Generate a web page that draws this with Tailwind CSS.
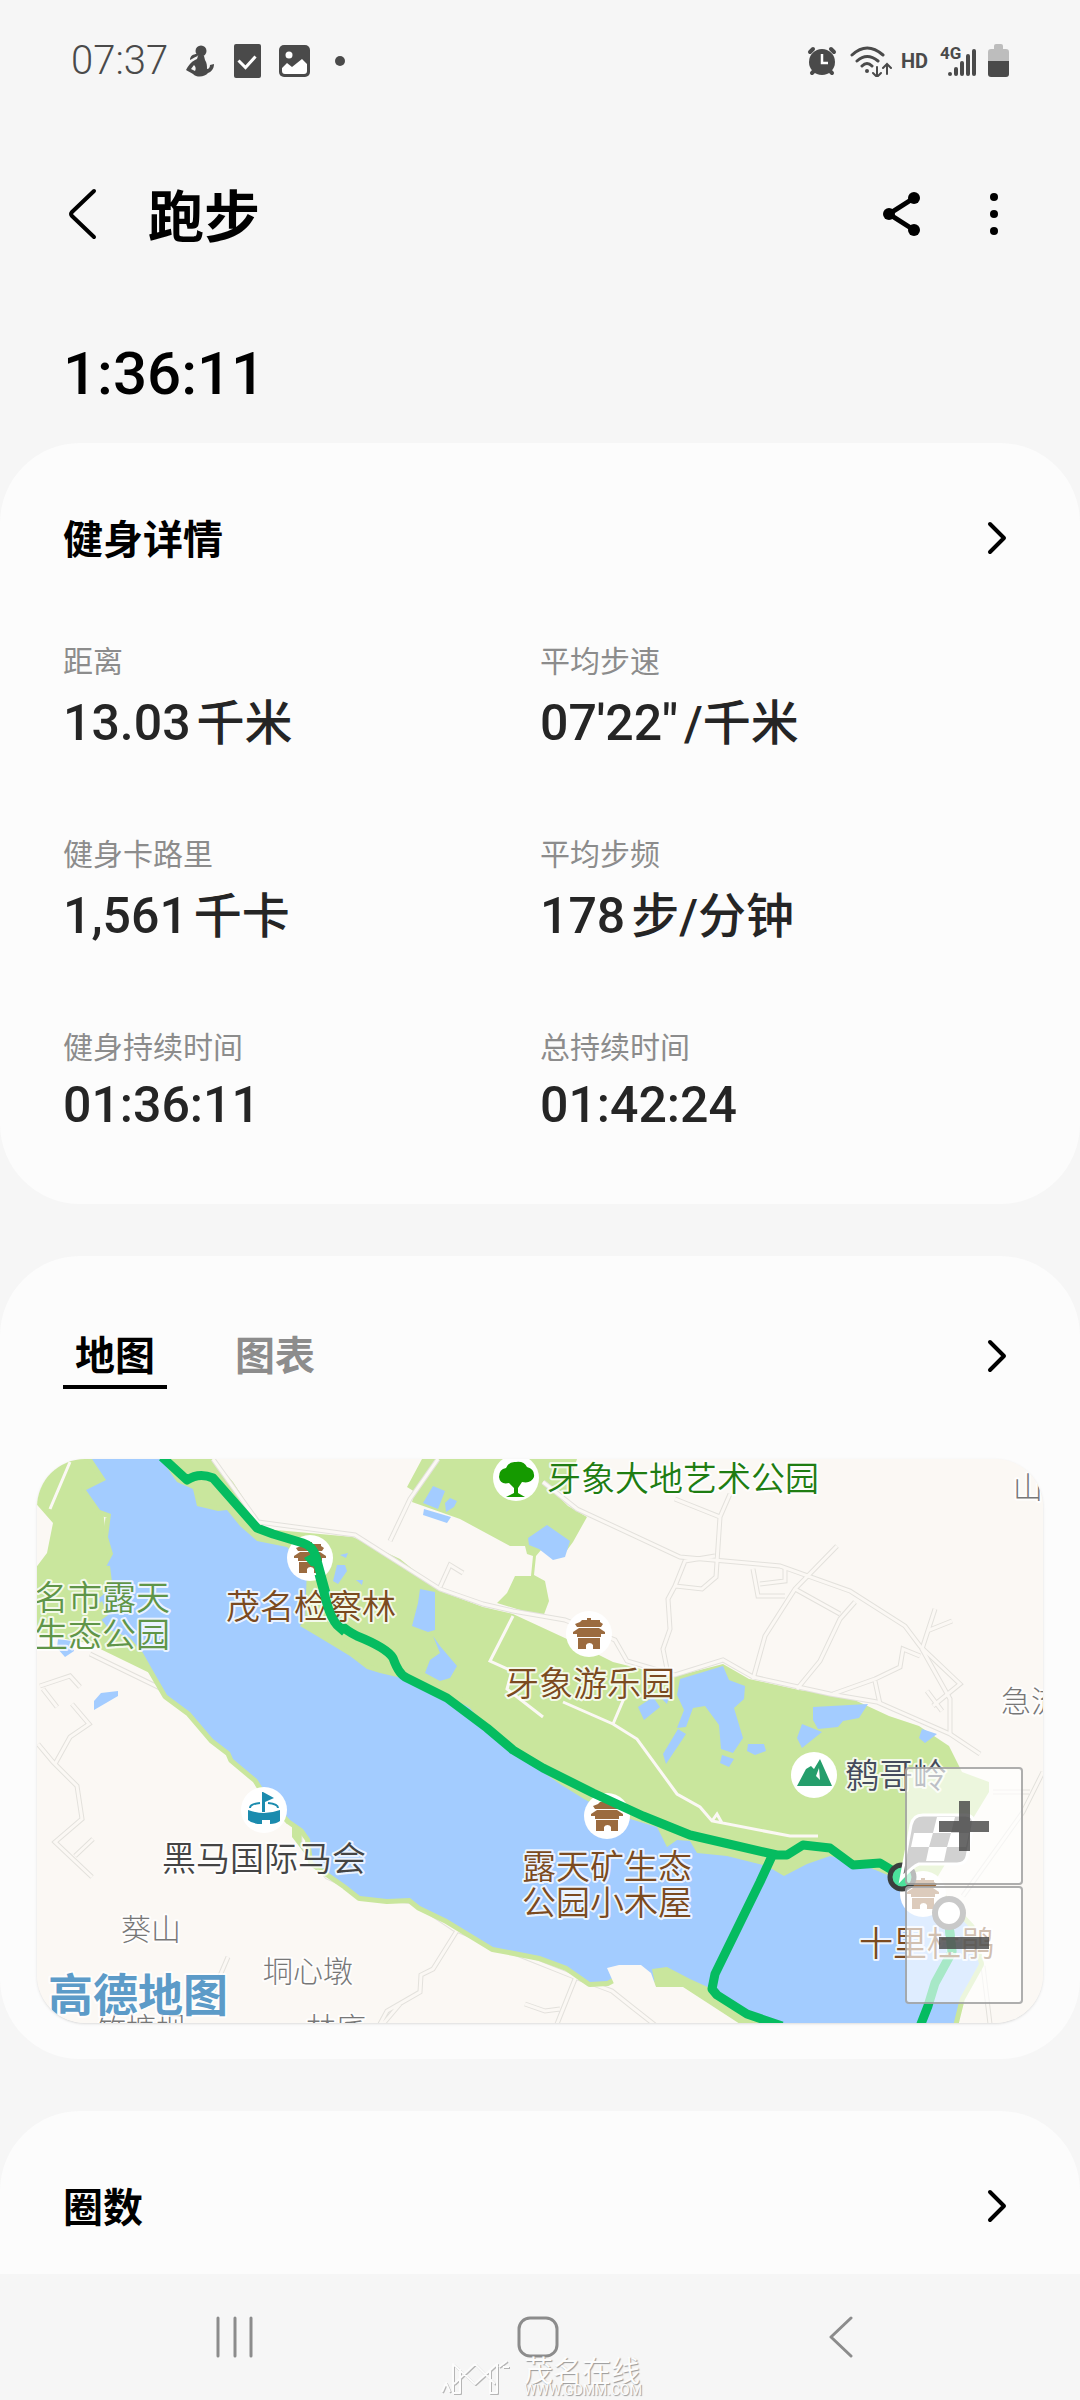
<!DOCTYPE html>
<html lang="zh-CN">
<head>
    <meta charset="UTF-8">
    <meta name="viewport" content="width=device-width, initial-scale=1.0">
    <title>跑步</title>
    <script src="https://cdn.jsdelivr.net/npm/@tailwindcss/browser@4"></script>
    <style>
        body {
            font-family: 'Roboto', 'Noto Sans CJK SC', sans-serif;
        }
        .halo text {
            paint-order: stroke;
            stroke: #ffffff;
            stroke-opacity: .8;
            stroke-width: 4px;
            stroke-linejoin: round;
        }
    </style>
</head>
<body class="bg-[#f6f6f6] text-black min-h-screen flex flex-col">
    <!-- Status Bar -->
    <div class="h-[122px] px-[71px] flex items-center justify-between text-[#4a4a4a]">
        <div class="flex items-center">
            <span class="text-[40px] leading-[48px] font-light">07:37</span>
            <svg class="ml-[18px] w-7 h-8" viewBox="0 0 28 32" fill="#4a4a4a">
                <circle cx="15" cy="6" r="5.5"/>
                <path d="M11 9l1 2c-4 1-5 3-8 4 0-4 3-6 7-6zM12 11h6l1 4c2 3 2 6 2 9 2 0 3-2 3-4l4-1c0 5-3 8-6 9-3 4-11 5-15 1-2-1-5-3-7-4 2-4 5-8 9-10l2-1z"/>
                <path d="M8 20l-3 4 4 2c1-2 1-4-1-6z" fill="#f6f6f6"/>
            </svg>
            <svg class="ml-5 w-[27px] h-[34px]" viewBox="0 0 27 34">
                <rect width="27" height="34" rx="2" fill="#4a4a4a"/>
                <path d="M4.500 16.500l7 7 10-11" fill="none" stroke="#fff" stroke-width="3"/>
            </svg>
            <svg class="ml-[18px] w-8 h-8" viewBox="0 0 32 32">
                <rect width="31" height="32" rx="5" fill="#4a4a4a"/>
                <circle cx="10" cy="10" r="3.500" fill="#fff"/>
                <path d="M3 23l5-5 5 4 10-8 5 5v7q0 3-3 3H6q-3 0-3-3z" fill="#fff"/>
            </svg>
            <span class="ml-6 w-[10px] h-[10px] rounded-full bg-[#4a4a4a]"></span>
        </div>
        <div class="flex items-center">
            <svg class="w-[30px] h-8" viewBox="0 0 30 32">
                <g stroke="#4a4a4a" stroke-width="4" stroke-linecap="round">
                    <path d="M3 7l3-3M27 7l-3-3M5 28l3-3M25 28l-3-3"/>
                </g>
                <circle cx="15" cy="17" r="13" fill="#4a4a4a"/>
                <path d="M15 9v9h6" fill="none" stroke="#fff" stroke-width="2.500"/>
            </svg>
            <svg class="ml-3 w-11 h-8" viewBox="0 0 44 32" fill="none" stroke="#4a4a4a" stroke-width="3" stroke-linecap="round">
                <path d="M3 10q15-14 31 0M8 16q10-9 21 0M13 21q5-5 10 0"/>
                <circle cx="18" cy="26" r="2" fill="#4a4a4a" stroke="none"/>
                <path d="M28 22v9M24 28l4 4 4-4M38 29v-9M34 23l4-4 4 4" stroke-width="2"/>
            </svg>
            <span class="ml-2 text-[20px] leading-6 font-bold">HD</span>
            <div class="relative ml-2 w-11 h-8">
                <span class="absolute left-1 top-0 text-[17px] leading-4 font-bold">4G</span>
                <svg class="w-full h-full" viewBox="0 0 44 32" fill="#4a4a4a">
                    <rect x="12" y="27" width="4" height="4" rx="2"/>
                    <rect x="18" y="22" width="4" height="9" rx="2"/>
                    <rect x="24" y="16" width="4" height="15" rx="2"/>
                    <rect x="30" y="9" width="4" height="22" rx="2"/>
                    <rect x="36" y="4" width="4" height="27" rx="2"/>
                </svg>
            </div>
            <svg class="ml-2 w-[21px] h-[34px]" viewBox="0 0 21 34">
                <path d="M6 2q0-2 2-2h5q2 0 2 2v3h3q3 0 3 3v10H0V8q0-3 3-3h3z" fill="#bdbdbd"/>
                <path d="M0 17h21v13q0 3-3 3H3q-3 0-3-3z" fill="#4a4a4a"/>
            </svg>
        </div>
    </div>

    <!-- Header -->
    <header class="h-[188px] pl-16 pr-[76px] pb-1 flex items-center">
        <button class="w-10 h-14 flex items-center justify-center" aria-label="返回">
            <svg class="w-8 h-[52px]" viewBox="0 0 32 52" fill="none" stroke="#000" stroke-width="4" stroke-linecap="round" stroke-linejoin="round">
                <path d="M26 3L4 24q-2 2 0 4l22 21"/>
            </svg>
        </button>
        <h1 class="ml-11 pt-2 flex-1 text-[56px] leading-[72px] font-bold">跑步</h1>
        <button aria-label="分享">
            <svg class="w-10 h-11" viewBox="0 0 40 44">
                <path d="M32 6L7 22l25 16" fill="none" stroke="#000" stroke-width="5"/>
                <circle cx="32" cy="6" r="6"/><circle cx="7" cy="22" r="6"/><circle cx="32" cy="38" r="6"/>
            </svg>
        </button>
        <button class="ml-[62px]" aria-label="更多">
            <svg class="w-5 h-11" viewBox="0 0 20 44">
                <circle cx="10" cy="5" r="4"/><circle cx="10" cy="22" r="4"/><circle cx="10" cy="39" r="4"/>
            </svg>
        </button>
    </header>

    <p class="h-[133px] pt-7 px-[63px] text-[60px] leading-[72px] font-medium">1:36:11</p>

    <main class="flex-1 flex flex-col gap-[52px]">
        <!-- Details -->
        <section class="bg-[#fcfcfc] rounded-[80px] px-[63px] pt-[70px] pb-16">
            <div class="h-14 flex items-center justify-between">
                <h2 class="text-[40px] leading-[56px] font-bold">健身详情</h2>
                <button class="w-10 h-10" aria-label="查看健身详情">
                    <svg class="w-10 h-10" viewBox="0 0 40 40" fill="none" stroke="#000" stroke-width="4" stroke-linecap="round" stroke-linejoin="round"><path d="M13 3l14 14-14 14"/></svg>
                </button>
            </div>
            <dl class="mt-[71px] grid grid-cols-2 gap-y-[70px] text-[#252525]">
                <div>
                    <dt class="text-[30px] leading-[44px] text-[#8c8c8c]">距离</dt>
                    <dd class="text-[50px] leading-[78px] font-medium">13.03<span class="ml-[6px] text-[48px]">千米</span></dd>
                </div>
                <div>
                    <dt class="text-[30px] leading-[44px] text-[#8c8c8c]">平均步速</dt>
                    <dd class="text-[50px] leading-[78px] font-medium">07'22"<span class="ml-[6px] text-[48px]">/千米</span></dd>
                </div>
                <div>
                    <dt class="text-[30px] leading-[44px] text-[#8c8c8c]">健身卡路里</dt>
                    <dd class="text-[50px] leading-[78px] font-medium">1,561<span class="ml-[6px] text-[48px]">千卡</span></dd>
                </div>
                <div>
                    <dt class="text-[30px] leading-[44px] text-[#8c8c8c]">平均步频</dt>
                    <dd class="text-[50px] leading-[78px] font-medium">178<span class="ml-[6px] text-[48px]">步/分钟</span></dd>
                </div>
                <div>
                    <dt class="text-[30px] leading-[44px] text-[#8c8c8c]">健身持续时间</dt>
                    <dd class="text-[50px] leading-[70px] font-medium">01:36:11</dd>
                </div>
                <div>
                    <dt class="text-[30px] leading-[44px] text-[#8c8c8c]">总持续时间</dt>
                    <dd class="text-[50px] leading-[70px] font-medium">01:42:24</dd>
                </div>
            </dl>
        </section>

        <!-- Map -->
        <section class="bg-[#fcfcfc] rounded-[80px] pt-[72px] pb-9">
            <div class="px-[63px] flex items-center justify-between">
                <div class="flex gap-14" role="tablist">
                    <button role="tab" aria-selected="true" class="px-3 border-b-4 border-black text-[40px] leading-[57px] font-bold">地图</button>
                    <button role="tab" aria-selected="false" class="px-3 border-b-4 border-transparent text-[40px] leading-[57px] font-bold text-[#8c8c8c]">图表</button>
                </div>
                <button class="w-10 h-10" aria-label="查看地图">
                    <svg class="w-10 h-10" viewBox="0 0 40 40" fill="none" stroke="#000" stroke-width="4" stroke-linecap="round" stroke-linejoin="round"><path d="M13 3l14 14-14 14"/></svg>
                </button>
            </div>
            <div class="relative mt-[70px] mx-[37px] rounded-[48px] overflow-hidden bg-[#fbf8f4] shadow-sm">
                <svg class="block w-full h-auto" viewBox="37 1460 1006 564" font-family="'Noto Sans CJK SC', sans-serif">
                    <defs>
                        <g id="roads" fill="none">
                            <path d="M40 1687l30-10 10 11M43 1690l14 18M72 1705l17 20-19 13-15 27M38 1745l15 18 24 24 5 33-27 23 37 35M93 1840l-18 17"/>
                            <path d="M90 1655l74 36 25 20 41 44 24 18 10 17 23 23 17 14v21l23 30 45 20 42 5 40 27 118 47 40 15 20 16 28 22"/>
                            <path d="M458 1930l-25 40-12 6-1 17-33 19-7 13M577 1975l-20 50M525 2005l20 7 15-2M228 1958l-18 42M400 2005l-17 20"/>
                            <path d="M213 1460l45 63 97 13 85 54 43 15 30 7 52 9 50 20 12 21 48 14 48-15 30 17 77 17 47 8 73 32 30 20"/>
                            <path d="M390 1542l20-42 28-40M440 1588l10-22 13 8"/>
                            <path d="M543 1483l34 27 103 48 100 9 70 25 55 35 15 20 40 38-27 22"/>
                            <path d="M675 1500l45 18-4 60-14 12-27-3 10-25 30-5M720 1518l10-23M675 1587l-7 13 2 30-7 20 5 25"/>
                            <path d="M753 1570l5 27h27M760 1585l25-3v-14M837 1547l-42 43-30 47-12 43M795 1590l45 25M855 1603l-15 17-20 42-23 28M833 1695l42-15 25-12 3-18 17 7M875 1682l5 23M935 1610l-13 40 28 50v35M927 1632l25-10M927 1692l15 20"/>
                            <path d="M1043 1773l-20 40-60 84M993 1793h37M983 1967l7 58"/>
                        </g>
                        <g id="pagoda" fill="#9b6b3f">
                            <path d="M-7-14h5v-2h4v2h9v2l3 2-2 3h-24l-2-3 5-2z"/>
                            <path d="M-10-6h20l6 4v2h-4v3h-24v-3h-4v-2z"/>
                            <path d="M-11 4h22v11h-7v-4a4 4 0 0 0-7 0v4h-8z"/>
                        </g>
                    </defs>
                    <rect x="37" y="1460" width="1006" height="564" fill="#fbf8f4"/>

                    <!-- parks -->
                    <g fill="#c9e69d">
                        <path d="M37 1460h60l20 170 35 30 40 40 41 40 30 30 20 35 30 10 0 25 45 45 62 5 40 27 60 20 50 15 37 16 5 15-52-16-118-47-40-27-42-5-45-20-23-30v-21l-40-38-24-35-41-44-25-20-74-36-56-10v-60l15-20 6-30-22-25z"/>
                        <path d="M150 1460h63l20 23 24 37 8 10 88 8 47 22 40 32 43 16 30 7 54 25 46 23 60 15 50-13 26 15 50 11 47 6 43 20 30 10 30 20 13 26 27 10v10l-57 94-60 10-340 0-140-70-100-120-160-100z"/>
                        <path d="M422 1460l-15 28 8 5-3 10 48 17 50 27h15l2 8 6 2-2 20h-16l-8 17-10 10 46 14 6-16-4-20-11-6 2-19 5-6 13 8 8-1 11-15 14-25-19-11-24-24 22 12 11-35z"/>
                    </g>

                    <!-- roads -->
                    <use href="#roads" stroke="#e3e1dc" stroke-width="5"/>
                    <use href="#roads" stroke="#fbf8f4" stroke-width="3"/>
                    <path fill="none" stroke="#fbf8f4" stroke-width="3" d="M70 1463l-20 47M513 1617l-23 45 22 10-5 18 36 28M563 1703l50 22 24 15 40 55 23 13 12 14 78 15h28M613 1725l12-28M712 1822l5-7 5 9"/>

                    <!-- river -->
                    <path fill="#a3ccff" stroke="#c9e69d" stroke-width="10" stroke-linejoin="round" paint-order="stroke" d="M92 1460h69l16 23 16 7 4 17 21 5 9-1 13 16 17 15 30 6 20 22-2 50-5 7 17 10 33 20 17 13 13 4 30 7 20 6 40 22 14 18 26 16 24 24 26 18 24 15 26 14 47 14 10 20 10-7 13 1 7 12 30 3 40 10 17 10 23-12 23-8 24 5 36 15 50 20 30 32 9 36-19 34-10 40H780l-33-13-37-25-20-8-23-12-20 2-27-8-13 7-17 1-23-16-27-10-47-9-23-14-23-14-27-13-10-8-23 1-27-3-14-11-33-23-3-23-7-10-13-9-23-25-10-16-24-20-3-7-17-13-23-27-23-17-15-26-9-16-13-15-20-8-10-12-2-36 3-6 12-22-5-17 3-23-11-4-14-20 20-10z"/>
                    <path fill="#c9e69d" d="M90 1575l10-9 10 1 2 16-8 12-10 8zM92 1610l10-8 6 14-8 6z"/>
                    <path fill="#c9e69d" d="M652 1970l15-2 23 12 22 10 30 20 20 16h-22l-57-36h-27z"/>
                    <path fill="#fbf8f4" d="M607 1969l12-3h22l10 8 5 14h27l57 37h-77l-28-20-20-18z"/>

                    <!-- ponds -->
                    <g fill="#a3ccff">
                        <path d="M58 1640l14 2 2 10-9 6-8-9zM94 1702l7-8 17-2v5l-24 14zM337 1566l8 0 2 6-9 13-5-3zM340 1556l8-2-2 5zM356 1581h7l-1 5z"/>
                        <path d="M433 1487l12 5-7 18-15-6zM445 1504l5-5 7 3-3 6-8 5zM424 1510l27 8-4 6-24-8zM528 1539l19-13 23 16-5 16-12 3-14-11-10-4z"/>
                        <path d="M420 1590l15 3v38l-7 2-16-6 6-23zM433 1637l7 10 17 20-7 12-10 3-15-8 5-13 10-7z"/>
                        <path d="M638 1708l15-10 7 10-16 13zM662 1700l7-2-2 7zM680 1680l43-13 6 14 16 6-1 13-10 9 9 30-10 15-12-4-2-24-14-19-12 2-7 19-9 1 7-18-7-15zM678 1730l8 5-20 30-3-10zM722 1756l12 4-5 8-9-4zM748 1745l16 0 2 7-11 4-8-4z"/>
                        <path d="M813 1708l55-3-9 14-16 3-5 6-20 2-5-9zM802 1725l20 8-20 16-5-10zM922 1730l15 5-12 9-6-5z"/>
                    </g>

                    <!-- place markers -->
                    <g fill="#fff">
                        <circle cx="310" cy="1559" r="23"/><circle cx="516" cy="1479" r="23"/><circle cx="589" cy="1635" r="23"/>
                        <circle cx="607" cy="1817" r="23"/><circle cx="264" cy="1811" r="23"/><circle cx="814" cy="1776" r="23"/>
                        <circle cx="923" cy="1895" r="23"/>
                    </g>
                    <use href="#pagoda" x="310" y="1559"/>
                    <use href="#pagoda" x="589" y="1635"/>
                    <use href="#pagoda" x="607" y="1817"/>
                    <use href="#pagoda" x="923" y="1895"/>
                    <path fill="#159a00" d="M499 1478q0-8 7-9 3-7 10-6 8-1 11 5 8 2 7 10-3 7-12 5l-4 6v5l7 4h-19l8-4v-5l-5-5q-9 2-10-6z"/>
                    <g fill="#1b8bae">
                        <path d="M263 1793l11 6-9 4v10h-3v-20zM248 1811q16 6 32 0v11q-4 3-10 3v-4h-8v4q-10 0-14-4z"/>
                        <path d="M250 1809q0-4 10-5M268 1804q10 1 10 5" fill="none" stroke="#1b8bae" stroke-width="2"/>
                    </g>
                    <path fill="#259e6c" d="M797 1787l9-17 5-3 3 3 6-10 12 27z"/>
                    <path fill="#fff" d="M819 1769l-3 8 4 4z"/>

                    <!-- track -->
                    <g fill="none" stroke="#05bc60" stroke-width="9" stroke-linejoin="round">
                        <path d="M162 1458l25 23q12-8 26-2l44 50 16 6 30 9q10 3 13 14l14 51q5 17 27 28 30 12 36 22 6 17 14 20l40 20 40 30 26 22 30 18 50 25 50 23 47 19 87 20h10l16-10 27 3 23 17 27-2 20 12"/>
                        <path d="M772 1857l-12 26-45 92-3 15 5 6 30 19 35 12M919 2030l9-23 7-23 17-31-3-27"/>
                        <path d="M304 1559l13-7 6 17-12-2z" fill="#05bc60" stroke="none"/>
                    </g>
                    <circle cx="902" cy="1878" r="12" fill="#4be19b" stroke="#3a3f3d" stroke-width="5"/>
                    <path d="M901 1880l10-54q2-10 12-10h42q10 0 8 10l-6 32q-2 7-10 7h-38q-6 2-18 15z" fill="#7d7d7d" stroke="#fff" stroke-width="3"/>
                    <path fill="#fff" d="M937 1818h18l-4 16h-18zM914 1834h19l-4 14h-18zM951 1834h18l-3 14h-19zM929 1848h18l-3 14h-18z"/>

                    <!-- place names -->
                    <g class="halo" font-size="34" font-weight="350">
                        <g fill="#5f9548">
                            <text x="34" y="1611">名市露天</text>
                            <text x="34" y="1648">生态公园</text>
                        </g>
                        <text x="547" y="1492" fill="#1f7d12">牙象大地艺术公园</text>
                        <g fill="#7b4a20">
                            <text x="226" y="1620">茂名检察林</text>
                            <text x="505" y="1697">牙象游乐园</text>
                            <text x="522" y="1880">露天矿生态</text>
                            <text x="522" y="1916">公园小木屋</text>
                            <text x="859" y="1957">十里杜鹃</text>
                        </g>
                        <text x="162" y="1872" fill="#444">黑马国际马会</text>
                        <text x="845" y="1789" fill="#444b5c">鹩哥岭</text>
                    </g>
                    <path d="M319 1575l8 30q4 14 10 21l8 7M952 1953l-3-27" fill="none" stroke="#05bc60" stroke-width="9"/>
                    <circle cx="949" cy="1914" r="14" fill="#fff" stroke="#666" stroke-width="6"/>
                    <g class="halo" font-size="30" font-weight="300" fill="#777">
                        <text x="121" y="1941">葵山</text>
                        <text x="263" y="1983">垌心墩</text>
                        <text x="96" y="2040">竹塘坝</text>
                        <text x="306" y="2040">林底</text>
                        <text x="1013" y="1499">山</text>
                        <text x="1001" y="1713">急流</text>
                    </g>
                    <g class="halo">
                        <text x="48" y="2013" font-size="45" font-weight="700" fill="#5c9bc8">高德地图</text>
                    </g>
                </svg>
                <!-- zoom controls -->
                <div class="absolute right-5 top-[308px] flex flex-col gap-px">
                    <button aria-label="放大" class="w-[118px] h-[118px] rounded-[4px] border-2 border-[#8c8c8c]/70 bg-white/65 flex items-center justify-center">
                        <svg class="w-[50px] h-[50px]" viewBox="0 0 50 50"><path d="M20 0h11v20h19v11H31v19H20V31H0V20h20z" fill="#444" fill-opacity=".8"/></svg>
                    </button>
                    <button aria-label="缩小" class="w-[118px] h-[118px] rounded-[4px] border-2 border-[#8c8c8c]/70 bg-white/65 flex items-center justify-center">
                        <svg class="w-[50px] h-[50px]" viewBox="0 0 50 50"><path d="M0 17h50v12H0z" fill="#444" fill-opacity=".8"/></svg>
                    </button>
                </div>
            </div>
        </section>

        <!-- Laps -->
        <section class="flex-1 bg-[#fcfcfc] rounded-t-[80px] px-[63px] pt-[70px]">
            <div class="h-14 flex items-center justify-between">
                <h2 class="text-[40px] leading-[56px] font-bold">圈数</h2>
                <button class="w-10 h-10" aria-label="查看圈数">
                    <svg class="w-10 h-10" viewBox="0 0 40 40" fill="none" stroke="#000" stroke-width="4" stroke-linecap="round" stroke-linejoin="round"><path d="M13 3l14 14-14 14"/></svg>
                </button>
            </div>
        </section>
    </main>

    <!-- Navigation Bar -->
    <nav class="relative h-[126px] pl-[83px] pr-[87px] grid grid-cols-3 items-center justify-items-center">
        <button aria-label="最近">
            <svg class="w-10 h-[42px]" viewBox="0 0 40 42" stroke="#8c8c8c" stroke-width="3" stroke-linecap="round"><path d="M3 2v38M20 2v38M36 2v38"/></svg>
        </button>
        <button aria-label="主页">
            <svg class="w-[42px] h-[42px]" viewBox="0 0 42 42" fill="none" stroke="#8c8c8c" stroke-width="3"><rect x="2" y="2" width="38" height="38" rx="11"/></svg>
        </button>
        <button aria-label="返回">
            <svg class="w-6 h-[42px]" viewBox="0 0 24 42" fill="none" stroke="#8c8c8c" stroke-width="3" stroke-linecap="round" stroke-linejoin="round"><path d="M22 2L2 21l20 19"/></svg>
        </button>
        <div class="absolute bottom-1 left-[440px] flex items-end gap-3">
            <svg class="w-[72px] h-9" viewBox="0 0 72 36" fill="none" stroke-linejoin="round">
                <path d="M3 33l4-9 4 9M14 34V5l22 20L58 5v29h-7V12M14 34h7V10M36 5L15 25M36 5l20 20M60 8l8-6M64 8h6" stroke="#b5b5b5" stroke-width="2"/>
                <path d="M2 32l4-9 4 9M13 33V4l22 20L57 4v29h-7V11M13 33h7V9M35 4L14 24M35 4l20 20M59 7l8-6M63 7h6" stroke="#fcfcfc" stroke-width="2"/>
            </svg>
            <div class="text-[#fcfcfc] whitespace-nowrap">
                <div class="text-[29px] leading-6 [text-shadow:1px_1px_1px_#999]">茂名在线</div>
                <div class="text-[14px] leading-3 [text-shadow:1px_1px_1px_#999]">WWW.GDMM.COM</div>
            </div>
        </div>
    </nav>
</body>
</html>
